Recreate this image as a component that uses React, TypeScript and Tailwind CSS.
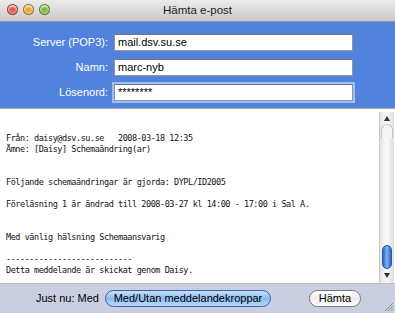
import React from "react"

const lines = [
  "",
  "",
  "Från: daisy@dsv.su.se   2008-03-18 12:35",
  "Ämne: [Daisy] Schemaändring(ar)",
  "",
  "",
  "Följande schemaändringar är gjorda: DYPL/ID2005",
  "",
  "Föreläsning 1 är ändrad till 2008-03-27 kl 14:00 - 17:00 i Sal A.",
  "",
  "",
  "Med vänlig hälsning Schemaansvarig",
  "",
  "---------------------------",
  "Detta meddelande är skickat genom Daisy.",
]

const Light = ({ c }: { c: string }) => (
  <div
    className={`h-[11px] w-[11px] rounded-full border border-black/30 ${c}`}
    style={{ boxShadow: "inset 0 2px 2px rgba(255,255,255,0.7), inset 0 -2px 3px rgba(255,255,255,0.35)" }}
  />
)

const Field = ({ label, value, focus }: { label: string; value: string; focus?: boolean }) => (
  <div className="flex items-center">
    <div className="w-[110px] pr-[2px] text-right text-[11px] text-white">{label}</div>
    <div
      className={`ml-[4px] flex h-[17px] w-[239px] items-center border border-[#8e96a6] border-t-[#6e7585] bg-white px-[3px] text-[11px] text-black ${
        focus ? "ring-2 ring-[#9fc0ee]" : ""
      }`}
    >
      {value}
    </div>
  </div>
)

export default function App() {
  return (
    <div
      className="flex h-[313px] w-[395px] flex-col overflow-hidden bg-[#c9cfe0]"
      style={{ fontFamily: "'Liberation Sans', Arial, sans-serif" }}
    >
      {/* title bar */}
      <div className="relative flex h-[22px] items-center justify-center border-b border-[#9a9a9a] bg-gradient-to-b from-[#ececec] to-[#c9c9c9]">
        <div className="absolute left-[7px] top-[4px] flex gap-[5px]">
          <Light c="bg-[#d8504a]" />
          <Light c="bg-[#e6a22a]" />
          <Light c="bg-[#79b33a]" />
        </div>
        <span className="text-[11.5px] text-[#1c1c1c]">Hämta e-post</span>
      </div>

      {/* form */}
      <div className="flex h-[86px] flex-col gap-[8px] bg-[#5283dc] pt-[12px]">
        <Field label="Server (POP3):" value="mail.dsv.su.se" />
        <Field label="Namn:" value="marc-nyb" />
        <Field label="Lösenord:" value="********" focus />
      </div>

      {/* message */}
      <div className="flex h-[175px] border-t border-[#a8a8a8] bg-white">
        <div
          className="flex-1 whitespace-pre px-[6px] pt-[2px] text-[8.5px] leading-[11px] tracking-[-0.45px] text-[#111]"
          style={{ fontFamily: "'DejaVu Sans Mono', monospace" }}
        >
          {lines.map((l, i) => (
            <div key={i} className="h-[11px]">
              {l}
            </div>
          ))}
        </div>
        <div className="mr-[1px] mt-[3px] flex w-[15px] flex-col items-center border-l border-[#c8c8c8] bg-gradient-to-r from-[#e4e4e4] via-[#fafafa] to-[#dcdcdc]">
          <div className="mt-[4px] h-0 w-0 border-x-[3px] border-b-[5px] border-x-transparent border-b-[#333]" />
          <div className="mt-[3px] h-[14px] w-[12px] rounded-t-full border border-b-0 border-[#c4c4c4] bg-[#f4f4f4]" />
          <div className="flex-1" />
          <div className="h-[24px] w-[10px] rounded-full border border-[#2a55a8] bg-gradient-to-r from-[#2d63c8] via-[#7fb2f3] to-[#2d63c8]" />
          <div className="mb-[5px] mt-[4px] h-0 w-0 border-x-[3px] border-t-[5px] border-x-transparent border-t-[#333]" />
        </div>
      </div>

      {/* bottom bar */}
      <div className="relative flex flex-1 items-center border-t border-[#b6bccb] pl-[36px]">
        <span className="text-[11px] text-black">Just nu: Med</span>
        <button className="ml-[6px] h-[17px] w-[166px] rounded-full border border-[#3b5fa5] bg-gradient-to-b from-[#c9e1fb] via-[#8bbcf1] to-[#b8dafb] text-[11px] leading-[15px] text-black">
          Med/Utan meddelandekroppar
        </button>
        <button className="ml-[38px] h-[17px] w-[52px] rounded-full border border-[#777] bg-gradient-to-b from-[#ffffff] via-[#eeeeee] to-[#ffffff] text-[11px] leading-[15px] text-black">
          Hämta
        </button>
        <svg className="absolute bottom-[1px] right-[1px]" width="11" height="11" viewBox="0 0 11 11">
          <path d="M10 2 L2 10 M10 5 L5 10 M10 8 L8 10" stroke="#8c8c8c" strokeWidth="1" />
        </svg>
      </div>
    </div>
  )
}
